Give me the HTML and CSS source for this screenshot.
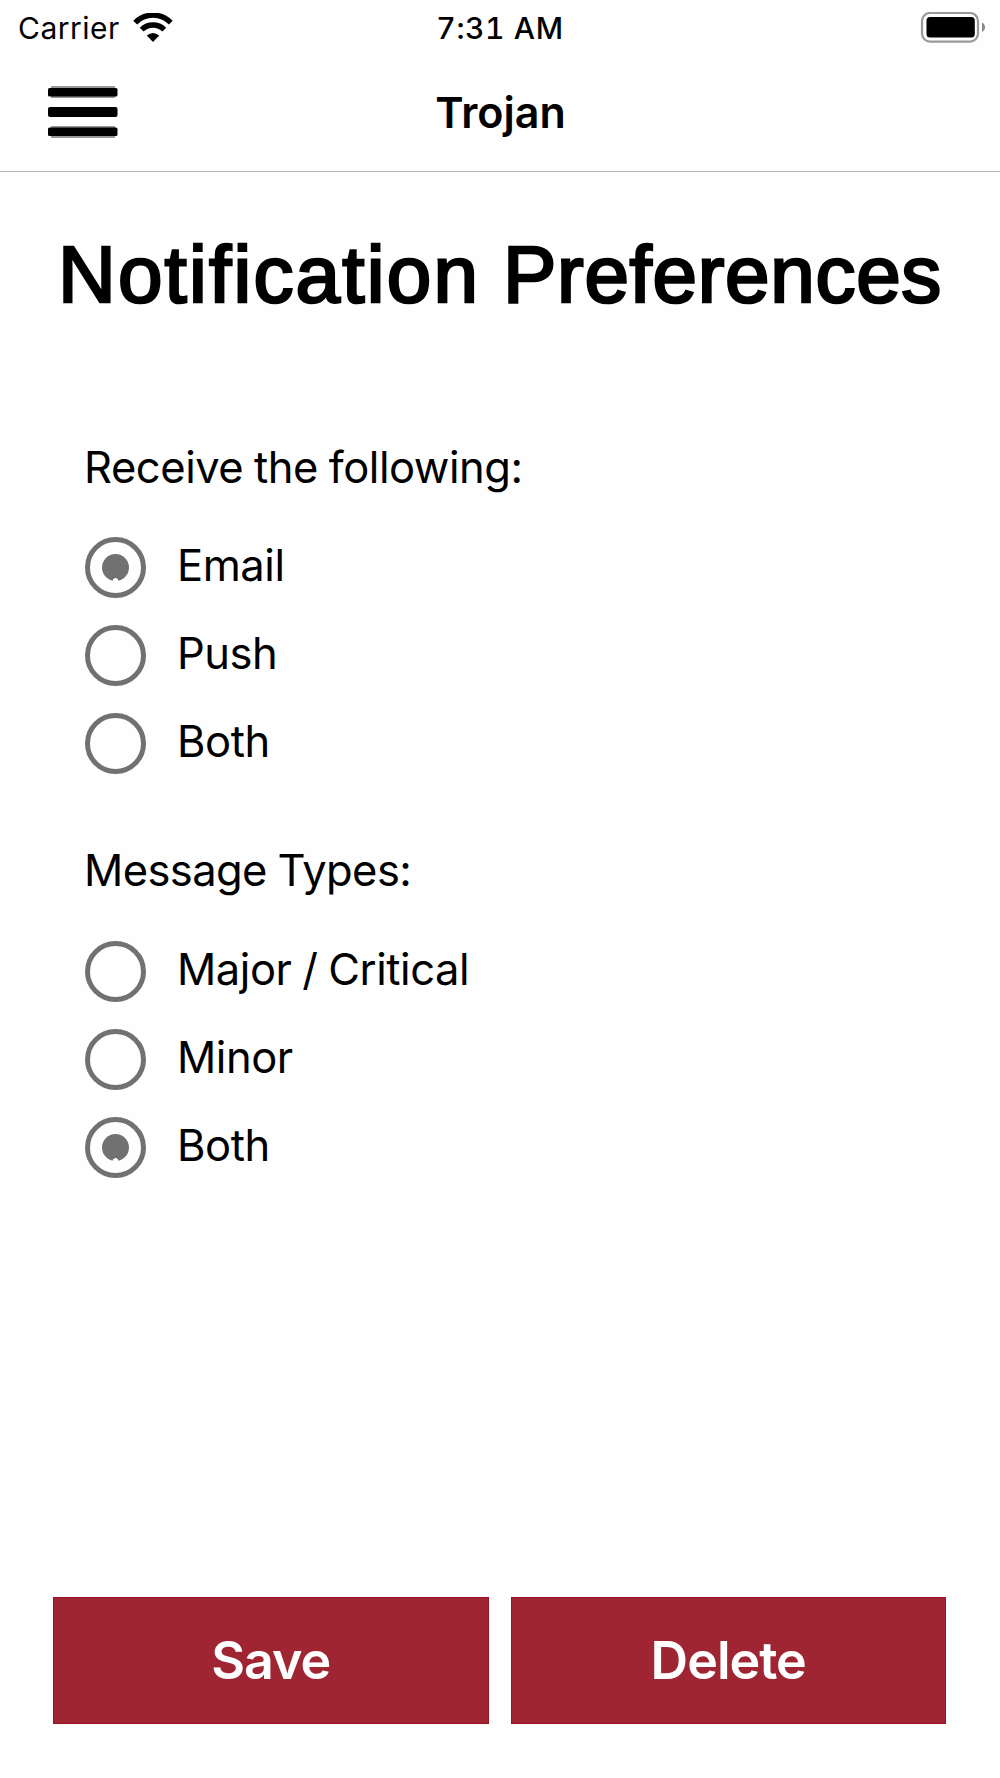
FILE: index.html
```html
<!DOCTYPE html>
<html lang="en">
<head>
    <meta charset="UTF-8">
    <meta name="viewport" content="width=device-width, initial-scale=1.0">
    <title>Notification Preferences</title>
    <link rel="stylesheet" href="styles.css">
</head>
<body>
    <header class="header">
        <div class="status-bar">
            <div class="carrier">
                <span>Carrier</span>
                <svg width="40" height="30" viewBox="0 0 40 30">
                    <path d="M2.2 9.6 A25 25 0 0 1 37.8 9.6" fill="none" stroke="#000" stroke-width="5.4"/>
                    <path d="M8.7 16.6 A16 16 0 0 1 31.3 16.6" fill="none" stroke="#000" stroke-width="5.4"/>
                    <path d="M13.8 22.6 Q20 17.6 26.2 22.6 L20 29 Z"/>
                </svg>
            </div>
            <span class="time">7:31 AM</span>
            <svg class="battery" width="66" height="32" viewBox="0 0 66 32">
                <rect x="2" y="1" width="56" height="28.6" rx="8" fill="none" stroke="#999" stroke-width="2.2"/>
                <rect x="6.5" y="5" width="48.3" height="20.5" rx="3.5"/>
                <path d="M62 10.5 Q65 12 65 15.3 Q65 18.5 62 20 Z" fill="#888"/>
            </svg>
        </div>
        <nav class="nav-bar">
            <button class="menu" aria-label="Menu">
                <svg width="70" height="54" viewBox="0 0 70 54">
                    <g fill="#999">
                        <rect x="3" y="1" width="64" height="12"/>
                        <rect x="3" y="41" width="64" height="12"/>
                    </g>
                    <rect y="3" width="69.5" height="8.5" rx="1.5"/>
                    <rect y="22" width="69.5" height="10" rx="2"/>
                    <rect y="42.5" width="69.5" height="8.5" rx="1.5"/>
                </svg>
            </button>
            <span class="nav-title">Trojan</span>
        </nav>
    </header>

    <main class="content">
        <h1><span class="wide">Notification</span> Preferences</h1>

        <div class="group">
            <p class="group-label">Receive the following:</p>
            <div class="option">
                <span class="radio checked"></span>
                <span class="option-text">Email</span>
            </div>
            <div class="option">
                <span class="radio"></span>
                <span class="option-text">Push</span>
            </div>
            <div class="option">
                <span class="radio"></span>
                <span class="option-text">Both</span>
            </div>
        </div>

        <div class="group">
            <p class="group-label">Message Types:</p>
            <div class="option">
                <span class="radio"></span>
                <span class="option-text">Major / Critical</span>
            </div>
            <div class="option">
                <span class="radio"></span>
                <span class="option-text">Minor</span>
            </div>
            <div class="option">
                <span class="radio checked"></span>
                <span class="option-text">Both</span>
            </div>
        </div>
    </main>

    <footer class="actions">
        <button class="btn">Save</button>
        <button class="btn">Delete</button>
    </footer>
</body>
</html>
```
FILE: styles.css
```css
* {
    box-sizing: border-box;
}

body {
    display: flex;
    flex-direction: column;
    height: 1778px;
    margin: 0;
    background: #fefefe;
    color: #000;
    font-family: Inter, sans-serif;
}

.header {
    height: 172px;
    border-bottom: 1px solid #b2b2b2;
}

.status-bar {
    display: grid;
    grid-template-columns: 1fr auto 1fr;
    align-items: center;
    height: 54px;
    padding: 0 14px 0 18px;
    font-size: 30px;
    line-height: 54px;
}

.carrier {
    display: flex;
    align-items: center;
    gap: 13px;
    letter-spacing: 0.5px;
}

.carrier span,
.time {
    padding-top: 1px;
}

.time {
    font-weight: 500;
    font-variant-numeric: tabular-nums;
    letter-spacing: 0.6px;
    margin-right: 4px;
}

.battery {
    justify-self: end;
}

.nav-bar {
    display: grid;
    grid-template-columns: 1fr auto 1fr;
    align-items: center;
    height: 116px;
    padding: 0 47px 0 48px;
}

.menu {
    display: flex;
    padding: 0;
    border: none;
    background: none;
}

.nav-title {
    font-size: 43px;
    font-weight: 600;
}

.content {
    flex: 1;
}

h1 {
    margin: 55px 0 0;
    font-family: "Liberation Sans", Arial, sans-serif;
    font-size: 80px;
    font-weight: 400;
    line-height: 96px;
    letter-spacing: 0.7px;
    text-align: center;
    white-space: nowrap;
    -webkit-text-stroke: 2.6px #000;
}

h1 .wide {
    letter-spacing: 2.2px;
}

.group {
    padding-left: 85px;
    font-size: 43.5px;
    letter-spacing: -0.45px;
    word-spacing: -1px;
}

.group-label {
    margin: 117px 0 30px -1px;
    line-height: 54px;
}

.group + .group .group-label {
    margin-top: 55px;
    margin-bottom: 31px;
    letter-spacing: -0.6px;
}

.option {
    display: flex;
    align-items: center;
    gap: 31px;
    height: 88px;
}

.option-text {
    padding-bottom: 6px;
}

.radio {
    display: flex;
    align-items: center;
    justify-content: center;
    width: 61px;
    height: 61px;
    margin-bottom: 1px;
    border: 5px solid #717171;
    border-radius: 50%;
}

/* dot with the small notch at the bottom */
.radio.checked::after {
    content: "";
    width: 27px;
    height: 27px;
    border-radius: 50%;
    background: radial-gradient(circle at 50% 100%, #fefefe 2.5px, #717171 3.2px);
}

.actions {
    display: grid;
    grid-template-columns: 1fr 1fr;
    gap: 22px;
    padding: 0 54px 54px 53px;
}

.btn {
    height: 127px;
    padding: 0;
    border: 1px solid #9c1220;
    background: #9f2533;
    color: #fff;
    font-family: inherit;
    font-size: 52px;
    font-weight: 600;
    letter-spacing: -1px;
}
```
